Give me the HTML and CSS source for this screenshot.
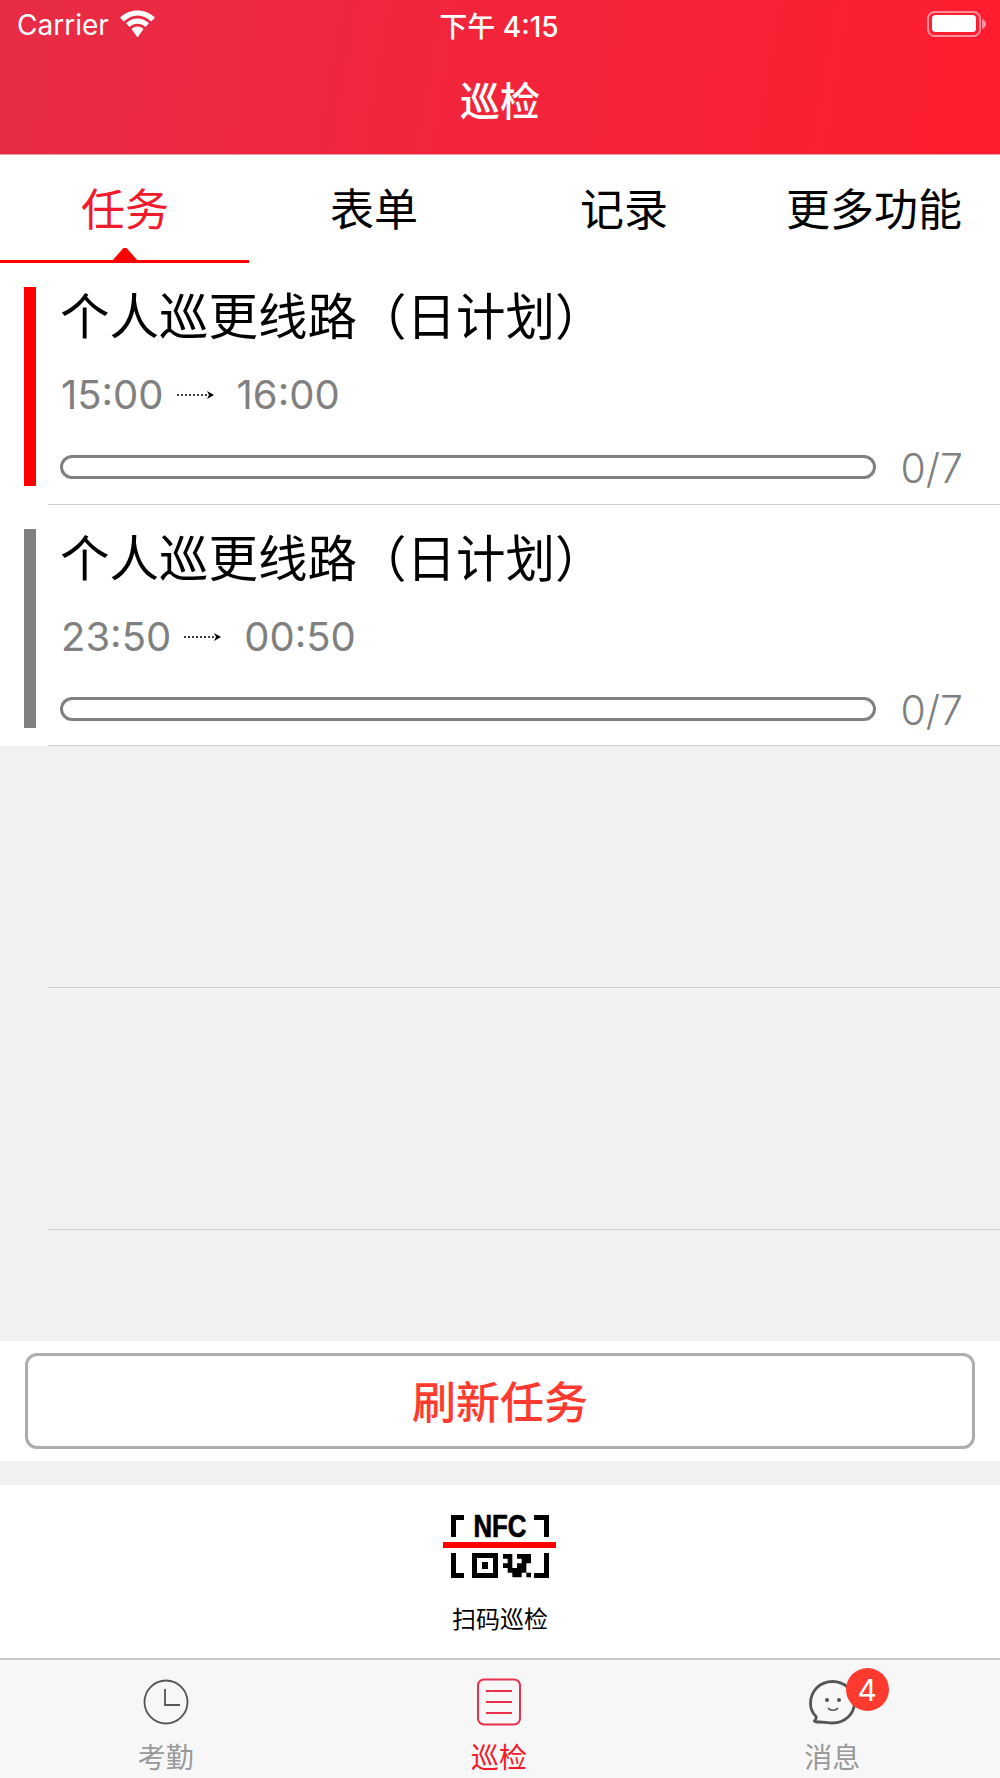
FILE: index.html
```html
<!DOCTYPE html>
<html lang="zh">
<head>
<meta charset="utf-8">
<title>巡检</title>
<link rel="stylesheet" href="styles.css">
</head>
<body>
<div class="app">
  <header class="header">
    <div class="status">
      <div class="status-left"><span>Carrier</span>
        <svg class="wifi" width="37" height="28" viewBox="0 0 36 28"><path d="M18 0.500C11.500 0.500 5.500 3 0.500 7.500L4.300 11.500C8.500 7.500 13 5.500 18 5.500S27.500 7.500 31.700 11.500L35.500 7.500C30.500 3 24.500 0.500 18 0.500Z" fill="#fff"/><path d="M18 8.500C13.800 8.500 9.800 10.200 6.500 13.300L10.100 17C12.500 14.800 15.100 13.700 18 13.700S23.500 14.800 25.900 17L29.500 13.300C26.200 10.200 22.200 8.500 18 8.500Z" fill="#fff"/><path d="M18 16.500C15.800 16.500 13.800 17.300 12 19L18 27.500 24 19C22.200 17.300 20.200 16.500 18 16.500Z" fill="#fff"/></svg>
      </div>
      <div class="status-time">下午 4:15</div>
      <div class="status-right">
        <svg width="60" height="27" viewBox="0 0 60 27"><rect x="1" y="1" width="52" height="24" rx="6.500" fill="none" stroke="#ff8e9a" stroke-width="2"/><rect x="5" y="4" width="44" height="17" rx="3.500" fill="#fff"/><path d="M55 8C57.500 9 59 10.500 59 13S57.500 17 55 18Z" fill="#ff8e9a"/></svg>
      </div>
    </div>
    <h1 class="title">巡检</h1>
  </header>

  <nav class="tabs">
    <div class="tab active">任务</div>
    <div class="tab">表单</div>
    <div class="tab">记录</div>
    <div class="tab">更多功能</div>
  </nav>

  <main class="list">
    <section class="row white">
      <div class="mark red"></div>
      <div class="row-body">
        <div class="row-title">个人巡更线路（日计划）</div>
        <div class="times"><span>15:00</span>
          <svg class="arrow" width="37" height="10" viewBox="0 0 37 10"><path d="M0 5H31" stroke="#000" stroke-width="1.600" stroke-dasharray="2 2" fill="none"/><path d="M30 1L37 5 30 9 32 5Z" fill="#000"/></svg>
          <span>16:00</span></div>
        <div class="progress"><div class="track"></div><span class="count">0/7</span></div>
      </div>
    </section>
    <section class="row white">
      <div class="mark grey"></div>
      <div class="row-body">
        <div class="row-title">个人巡更线路（日计划）</div>
        <div class="times"><span>23:50</span>
          <svg class="arrow" width="37" height="10" viewBox="0 0 37 10"><path d="M0 5H31" stroke="#000" stroke-width="1.600" stroke-dasharray="2 2" fill="none"/><path d="M30 1L37 5 30 9 32 5Z" fill="#000"/></svg>
          <span>00:50</span></div>
        <div class="progress"><div class="track"></div><span class="count">0/7</span></div>
      </div>
    </section>
    <section class="row"></section>
    <section class="row"></section>
    <div class="list-rest"></div>
  </main>

  <div class="refresh"><button class="refresh-btn">刷新任务</button></div>

  <div class="scan">
    <svg class="scan-icon" width="114" height="73" viewBox="0 -5 114 73">
      <path d="M8 25V3H21V8H13V25Z" fill="#000"/>
      <path d="M106 25V3H91V8H101V25Z" fill="#000"/>
      <rect x="0" y="30" width="113" height="6" fill="#f00"/>
      <path d="M8 41V66H21V61H13V41Z" fill="#000"/>
      <path d="M106 41V66H91V61H101V41Z" fill="#000"/>
      <path d="M29 41H55V66H29ZM34 46V61H50V46ZM39 50H45V57H39Z" fill="#000" fill-rule="evenodd"/>
      <g transform="translate(60 42) scale(4.670)"><path d="M0 0h2v1h-2zM3 0h3v1h-3zM1 1h1v1h-1zM4 1h2v1h-2zM0 2h2v1h-2zM3 2h2v1h-2zM1 3h4v1h-4zM2 4h2v1h-2zM5 4h1v1h-1z" fill="#000"/></g>
      <text class="nfc-text" x="57" y="25" text-anchor="middle" textLength="53" lengthAdjust="spacingAndGlyphs">NFC</text>
    </svg>
    <div class="scan-label">扫码巡检</div>
  </div>

  <footer class="tabbar">
    <div class="tb-item">
      <svg width="48" height="48" viewBox="0 0 48 48"><circle cx="24" cy="24" r="21.500" fill="none" stroke="#555" stroke-width="1.800"/><path d="M23 11V27H38" fill="none" stroke="#555" stroke-width="1.800"/></svg>
      <span class="tb-label">考勤</span>
    </div>
    <div class="tb-item on">
      <svg width="48" height="48" viewBox="0 0 48 48"><rect x="3" y="1.500" width="42" height="45" rx="6" fill="none" stroke="#e8304a" stroke-width="2"/><path d="M11 13H37M11 24H37M11 35H37" stroke="#e8304a" stroke-width="2" fill="none"/></svg>
      <span class="tb-label">巡检</span>
    </div>
    <div class="tb-item">
      <svg width="48" height="48" viewBox="0 0 48 48"><path d="M11 44C7 44 6.500 43 6.500 43C8 41.500 8.500 40 8 38.500C4 34.500 2.500 30 2.500 25.500C2.500 13 12 3.500 24.500 3.500C37 3.500 46.500 13 46.500 24C46.500 36 37 45 24.500 45C20 45 15 44 11 44Z" fill="none" stroke="#555" stroke-width="2.800"/><circle cx="19" cy="22" r="2" fill="#555"/><circle cx="31" cy="22" r="2" fill="#555"/><path d="M20 30C22 33 28 33 30 30" fill="none" stroke="#555" stroke-width="1.600"/></svg>
      <span class="tb-label">消息</span>
      <span class="badge">4</span>
    </div>
  </footer>
</div>
</body>
</html>
```
FILE: styles.css
```css
* { box-sizing: border-box; }
html, body { margin: 0; padding: 0; background: #f1f1f1; }
body { font-family: "Inter", "Noto Sans CJK SC", sans-serif; }
.app { width: 1000px; height: 1778px; display: flex; flex-direction: column; overflow: hidden; background: #f1f1f1; }

.header { height: 155px; flex: none; background: linear-gradient(100deg, #e72c46 0%, #ff1d2f 100%); color: #fff; border-bottom: 1px solid #e8a0a8; }
.status { height: 50px; display: grid; grid-template-columns: 1fr auto 1fr; align-items: center; font-size: 28px; }
.status-left { display: flex; align-items: center; gap: 10px; padding-left: 17px; }
.wifi { margin-top: -2px; }
.status-time { font-weight: 500; font-size: 28px; padding-right: 2px; }
.status-right { justify-self: end; display: flex; padding-right: 13px; margin-top: -2px; }
.title { margin: 0; height: 104px; padding-bottom: 6px; display: flex; align-items: center; justify-content: center; font-size: 40px; font-weight: 500; }

.tabs { height: 108px; flex: none; display: grid; grid-template-columns: repeat(4, 1fr); background: #fff; }
.tab { display: flex; justify-content: center; padding-top: 30px; padding-right: 2px; font-size: 44px; line-height: 1.150; color: #000; font-weight: 400; position: relative; }
.tab.active { color: #ef1a2c; padding-right: 0; }
.tab.active::before { content: ""; position: absolute; left: 0; bottom: 0; width: 249px; height: 3px; background: #f00; }
.tab.active::after { content: ""; position: absolute; left: 112px; bottom: 2px; width: 26px; height: 13px; background: #f00; clip-path: polygon(44% 0, 56% 0, 100% 100%, 0 100%); }

.list { flex: none; height: 1078px; background: #f1f1f1; display: flex; flex-direction: column; }
.row { height: 241.700px; flex: none; padding-left: 48px; position: relative; display: flex; }
.row::after { content: ""; position: absolute; left: 48px; right: 0; bottom: 0; border-bottom: 1px solid #cfcfcf; }
.row.white { background: #fff; }
.list-rest { flex: 1; }
.mark { position: absolute; left: 24px; top: 24px; width: 12px; height: 199px; }
.mark.red { background: #f00; }
.mark.grey { background: #808080; }
.row-body { margin-left: 12px; flex: 1; padding-right: 37px; display: flex; flex-direction: column; }
.row-title { margin-top: 22px; font-size: 49.500px; line-height: 64px; height: 64px; color: #000; white-space: nowrap; }
.times { margin-top: 21px; padding-left: 1px; display: flex; align-items: center; color: #808080; font-size: 40px; line-height: 50px; height: 50px; }
.arrow { margin: 0 23px 0 13px; }
.progress { margin-top: 22px; display: flex; align-items: flex-start; justify-content: space-between; }
.track { margin-top: 13px; width: 816px; height: 24px; border: 3px solid #808080; border-radius: 12px; background: #fff; }
.count { margin-top: 1px; font-size: 41px; color: #808080; line-height: 50px; font-weight: 300; }

.refresh { flex: none; height: 120px; background: #fff; padding: 12px 25px; }
.refresh-btn { display: block; width: 100%; height: 96px; padding: 0 0 3px; background: #fff; border: 3px solid #adadad; border-radius: 12px; color: #ff3b30; font-family: inherit; font-size: 44px; font-weight: 500; }

.scan { flex: none; margin-top: 24px; height: 173px; background: #fff; display: flex; flex-direction: column; align-items: center; padding-top: 22px; }
.nfc-text { font-family: "Liberation Sans", sans-serif; font-size: 31px; font-weight: 700; fill: #000; stroke: #000; stroke-width: 0.700px; }
.scan-label { margin-top: 22px; font-size: 24px; line-height: 36px; color: #000; }

.tabbar { flex: none; height: 120px; background: #f7f7f7; border-top: 2px solid #c8c8c8; display: grid; grid-template-columns: 1fr 1fr 1fr; }
.tb-item { position: relative; display: flex; flex-direction: column; align-items: center; padding-top: 18px; padding-right: 2px; }
.tb-label { margin-top: 13px; font-size: 28px; line-height: 38px; color: #999; }
.tb-item.on .tb-label { color: #f5182a; }
.badge { position: absolute; left: 179px; top: 8px; width: 43px; height: 43px; border-radius: 50%; background: #ff3b30; color: #fff; font-size: 30px; display: flex; align-items: center; justify-content: center; }
```
